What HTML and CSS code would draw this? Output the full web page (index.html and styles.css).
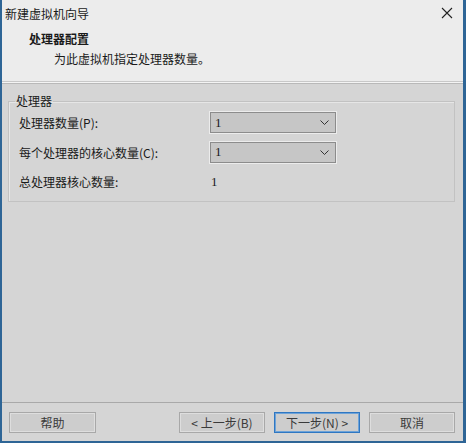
FILE: index.html
```html
<!DOCTYPE html>
<html lang="zh-CN">
<head>
  <meta charset="UTF-8" />
  <title>新建虚拟机向导</title>
  <link rel="stylesheet" href="styles.css">
</head>
<body>
  <div class="window">
    <div class="titlebar">
      <span class="title">新建虚拟机向导</span>
      <span class="close">
        <svg width="12" height="12" viewBox="0 0 12 12"><path d="M1 1L11 11M11 1L1 11" stroke="#222" stroke-width="1.1" fill="none"/></svg>
      </span>
    </div>

    <div class="header">
      <div class="header-title">处理器配置</div>
      <div class="header-sub">为此虚拟机指定处理器数量。</div>
    </div>

    <div class="content">
      <fieldset class="group">
        <legend>处理器</legend>
        <div class="row">
          <span class="label">处理器数量(P):</span>
          <div class="select"><span>1</span><span class="arrow"><svg width="9" height="5" viewBox="0 0 9 5"><path d="M0.5 0.5L4.5 4.5L8.5 0.5" stroke="#333" fill="none"/></svg></span></div>
        </div>
        <div class="row">
          <span class="label">每个处理器的核心数量(C):</span>
          <div class="select"><span>1</span><span class="arrow"><svg width="9" height="5" viewBox="0 0 9 5"><path d="M0.5 0.5L4.5 4.5L8.5 0.5" stroke="#333" fill="none"/></svg></span></div>
        </div>
        <div class="row">
          <span class="label">总处理器核心数量:</span>
          <span class="value">1</span>
        </div>
      </fieldset>
    </div>

    <div class="footer">
      <button class="btn help">帮助</button>
      <div class="spacer"></div>
      <button class="btn">&lt; 上一步(B)</button>
      <button class="btn default">下一步(N) &gt;</button>
      <button class="btn">取消</button>
    </div>
  </div>
</body>
</html>
```

FILE: styles.css
```css
body {
  margin: 0;
  font-family: "Noto Sans CJK SC", "Liberation Sans", sans-serif;
  font-size: 12px;
  color: #1a1a1a;
}
.window {
  width: 466px;
  height: 443px;
  box-sizing: border-box;
  border-left: 2px solid #2e6596;
  border-right: 3px solid #2e6596;
  border-bottom: 2px solid #2e6596;
  background-color: #d5d5d5;
  display: flex;
  flex-direction: column;
}
.titlebar {
  height: 26px;
  background-color: #ececec;
  display: flex;
  align-items: center;
  justify-content: space-between;
  padding: 0 10px 0 3px;
}
.title {
  font-size: 12px;
}
.close {
  display: flex;
}
.header {
  background-color: #ececec;
  height: 55px;
  padding-left: 27px;
  border-bottom: 1px solid #c8c8c8;
  box-shadow: 0 1px 0 #f4f4f4, 0 2px 0 #b9b9b9;
}
.header-title {
  font-weight: bold;
  padding-top: 4px;
  line-height: 18px;
}
.header-sub {
  padding-left: 25px;
  line-height: 18px;
  padding-top: 2px;
}
.content {
  flex: 1;
  padding: 12px 8px 0 6px;
}
.group {
  margin: 0;
  padding: 0 10px 4px 10px;
  border: 1px solid #c2c2c2;
  box-shadow: inset 1px 1px 0 #e6e6e6;
}
.group legend {
  padding: 0 1px;
  margin-left: -4px;
  line-height: 14px;
}
.row {
  display: flex;
  align-items: center;
  height: 29.5px;
}
.label {
  width: 191px;
}
.select {
  width: 126px;
  height: 21px;
  box-sizing: border-box;
  border: 1px solid #8c8c8c;
  box-shadow: 0 0 0 1px #ececec;
  background-color: #c6c6c6;
  display: flex;
  align-items: center;
  justify-content: space-between;
  padding: 0 6px 0 4px;
  font-family: "Liberation Serif", serif;
  font-size: 13px;
}
.arrow {
  display: flex;
}
.value {
  font-family: "Liberation Serif", serif;
  font-size: 13px;
  padding-left: 1px;
}
.footer {
  height: 38px;
  border-top: 1px solid #a9a9a9;
  display: flex;
  align-items: center;
  gap: 9px;
  padding: 0 8px 0 7px;
}
.spacer {
  flex: 1;
}
.btn {
  width: 86px;
  height: 21px;
  margin: 0;
  padding: 0;
  font-family: "Noto Sans CJK SC", "Liberation Sans", sans-serif;
  font-size: 12px;
  color: #3a3a3a;
  background-color: #cdcdcd;
  border: 1px solid #a8a8a8;
  box-shadow: inset 0 0 0 1px #dedede;
}
.btn.help {
  width: 87px;
}
.btn.default {
  border: 1px solid #2f77c2;
  box-shadow: inset 0 0 0 1px #6ea3d8;
}
```
